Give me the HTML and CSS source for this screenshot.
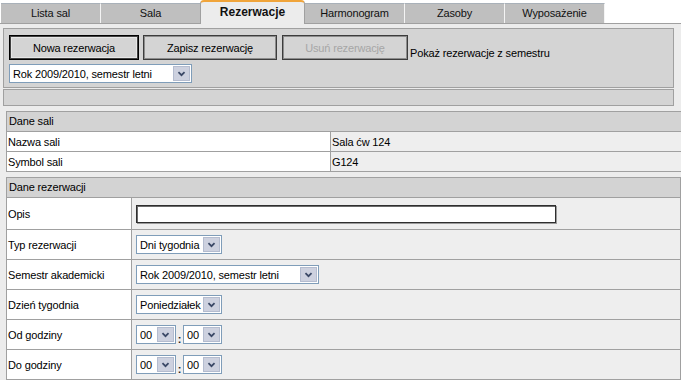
FILE: index.html
```html
<!DOCTYPE html>
<html lang="pl">
<head>
<meta charset="utf-8">
<title>Rezerwacje</title>
<link rel="stylesheet" href="styles.css">
</head>
<body>
<div class="tabs">
  <div class="tab">Lista sal</div>
  <div class="tab">Sala</div>
  <div class="tab active">Rezerwacje</div>
  <div class="tab">Harmonogram</div>
  <div class="tab">Zasoby</div>
  <div class="tab">Wyposażenie</div>
</div>
<div class="page">
  <div class="toolbar">
    <div class="btn-row">
      <button class="btn default">Nowa rezerwacja</button>
      <button class="btn btn-save">Zapisz rezerwację</button>
      <button class="btn btn-del" disabled>Usuń rezerwację</button>
      <span class="hint">Pokaż rezerwacje z semestru</span>
    </div>
    <div class="sel w-sem"><span class="sel-text">Rok 2009/2010, semestr letni</span><span class="sel-arrow"><svg viewBox="0 0 15 15" width="15" height="15"><path d="M4 6 L7.5 9.5 L11 6" fill="none" stroke="#3a4866" stroke-width="2"/></svg></span></div>
  </div>
  <div class="strip"></div>

  <div class="section sala">
    <div class="head">Dane sali</div>
    <div class="row">
      <div class="label">Nazwa sali</div>
      <div class="value">Sala ćw 124</div>
    </div>
    <div class="row">
      <div class="label">Symbol sali</div>
      <div class="value">G124</div>
    </div>
  </div>

  <div class="section rez">
    <div class="head">Dane rezerwacji</div>
    <div class="row tall">
      <div class="label">Opis</div>
      <div class="value"><span class="input"></span></div>
    </div>
    <div class="row">
      <div class="label">Typ rezerwacji</div>
      <div class="value"><div class="sel w-short"><span class="sel-text">Dni tygodnia</span><span class="sel-arrow"><svg viewBox="0 0 15 15" width="15" height="15"><path d="M4 6 L7.5 9.5 L11 6" fill="none" stroke="#3a4866" stroke-width="2"/></svg></span></div></div>
    </div>
    <div class="row">
      <div class="label">Semestr akademicki</div>
      <div class="value"><div class="sel w-sem"><span class="sel-text">Rok 2009/2010, semestr letni</span><span class="sel-arrow"><svg viewBox="0 0 15 15" width="15" height="15"><path d="M4 6 L7.5 9.5 L11 6" fill="none" stroke="#3a4866" stroke-width="2"/></svg></span></div></div>
    </div>
    <div class="row">
      <div class="label">Dzień tygodnia</div>
      <div class="value"><div class="sel w-short"><span class="sel-text">Poniedziałek</span><span class="sel-arrow"><svg viewBox="0 0 15 15" width="15" height="15"><path d="M4 6 L7.5 9.5 L11 6" fill="none" stroke="#3a4866" stroke-width="2"/></svg></span></div></div>
    </div>
    <div class="row">
      <div class="label">Od godziny</div>
      <div class="value">
        <div class="sel w-hour"><span class="sel-text">00</span><span class="sel-arrow"><svg viewBox="0 0 15 15" width="15" height="15"><path d="M4 6 L7.5 9.5 L11 6" fill="none" stroke="#3a4866" stroke-width="2"/></svg></span></div><span class="colon">:</span><div class="sel w-min"><span class="sel-text">00</span><span class="sel-arrow"><svg viewBox="0 0 15 15" width="15" height="15"><path d="M4 6 L7.5 9.5 L11 6" fill="none" stroke="#3a4866" stroke-width="2"/></svg></span></div>
      </div>
    </div>
    <div class="row">
      <div class="label">Do godziny</div>
      <div class="value">
        <div class="sel w-hour"><span class="sel-text">00</span><span class="sel-arrow"><svg viewBox="0 0 15 15" width="15" height="15"><path d="M4 6 L7.5 9.5 L11 6" fill="none" stroke="#3a4866" stroke-width="2"/></svg></span></div><span class="colon">:</span><div class="sel w-min"><span class="sel-text">00</span><span class="sel-arrow"><svg viewBox="0 0 15 15" width="15" height="15"><path d="M4 6 L7.5 9.5 L11 6" fill="none" stroke="#3a4866" stroke-width="2"/></svg></span></div>
      </div>
    </div>
  </div>
</div>
</body>
</html>
```

FILE: styles.css
```css
* { box-sizing: border-box; }

html, body {
  margin: 0;
  padding: 0;
}

body {
  width: 681px;
  height: 380px;
  overflow: hidden;
  background: #ffffff;
  font-family: "Liberation Sans", Arial, sans-serif;
  font-size: 11px;
  letter-spacing: -0.15px;
  color: #000;
}

/* Tabs */
.tabs {
  display: flex;
  align-items: flex-end;
  height: 24px;
  padding-left: 1px;
  border-bottom: 1px solid #a0a0a0;
}

.tab {
  width: 100px;
  height: 20px;
  background: #bfbfbf;
  border-top: 1px solid #a9b1b9;
  border-right: 1px solid #f4f4f4;
  text-align: center;
  line-height: 19px;
  color: #111;
}

.tab.active {
  width: 105px;
  height: 24px;
  margin-left: -1px;
  margin-bottom: -1px;
  background: #ececec;
  border-top: 2px solid #f0a43a;
  border-left: 1px solid #a0a0a0;
  border-right: 1px solid #a0a0a0;
  border-radius: 4px 4px 0 0;
  font-weight: bold;
  font-size: 12px;
  letter-spacing: 0;
  line-height: 20px;
}

/* Page */
.page {
  background: #ececec;
  padding: 4px 0 0 3px;
  height: 356px;
}

.toolbar {
  width: 671px;
  background: #d4d4d4;
  border: 1px solid #a0a0a0;
  padding: 6px 5px 4px 5px;
  display: flex;
  flex-direction: column;
  gap: 4px;
}

.btn-row {
  display: flex;
  align-items: flex-end;
  height: 25px;
}

.btn {
  height: 25px;
  margin: 0;
  padding: 0;
  font: inherit;
  letter-spacing: inherit;
  color: #000;
  background: #d4d4d4;
  border: 1px solid #3c3c3c;
  box-shadow: inset 0 0 0 1px #8c8c8c;
}

.btn.default {
  width: 130px;
  border: 1px solid #000;
  box-shadow: inset 0 0 0 1px #404040, inset 0 0 0 2px #e6e6e6;
}

.btn-save {
  width: 134px;
  margin-left: 4px;
}

.btn-del {
  width: 126px;
  margin-left: 5px;
  color: #a6a6a6;
}

.hint {
  margin-left: 2px;
  line-height: 13px;
}

/* Select */
.sel {
  display: inline-flex;
  align-items: center;
  height: 19px;
  background: #fff;
  border: 1px solid #7f9db9;
  padding: 1px;
}

.sel-text {
  flex: 1;
  padding-left: 2px;
  white-space: nowrap;
  overflow: hidden;
}

.sel-arrow {
  width: 17px;
  height: 15px;
  background: #cdd1df;
  border: 1px solid #b4bccf;
  display: flex;
  align-items: center;
  justify-content: center;
}

.sel-arrow svg { display: block; width: 13px; height: 13px; }

.w-sem { width: 183px; }
.w-short { width: 86px; }
.w-hour { width: 40px; }
.w-min { width: 39px; }

.colon {
  width: 7px;
  text-align: center;
  align-self: flex-end;
  line-height: 12px;
  padding-bottom: 4px;
  font-weight: bold;
  color: #222;
}

.strip {
  width: 671px;
  height: 17px;
  margin-top: 1px;
  background: #d4d4d4;
  border: 1px solid #a0a0a0;
}

/* Sections */
.section {
  margin-left: 3px;
  margin-top: 5px;
  width: 675px;
  border: 1px solid #a0a0a0;
  border-bottom: none;
}

.section.sala { width: 680px; border-right: none; }

.head {
  height: 20px;
  line-height: 19px;
  background: #d3d3d3;
  border-bottom: 1px solid #a0a0a0;
  padding-left: 2px;
}

.row {
  display: grid;
  grid-template-columns: 324px 1fr;
  height: 20px;
  border-bottom: 1px solid #a0a0a0;
}

.rez .row {
  grid-template-columns: 125px 1fr;
  height: 30px;
}

.rez .row.tall { height: 32px; }

.label {
  background: #fff;
  border-right: 1px solid #a0a0a0;
  padding-left: 1px;
  display: flex;
  align-items: center;
}

.value {
  background: #eeeeee;
  padding-left: 1px;
  display: flex;
  align-items: center;
}

.rez .value { padding-left: 4px; }

.input {
  display: block;
  width: 420px;
  height: 18px;
  background: #fff;
  border: 1px solid #2e2e2e;
  box-shadow: inset 1px 1px 0 #6a6a6a, 1px 1px 0 #9a9a9a;
}
```
